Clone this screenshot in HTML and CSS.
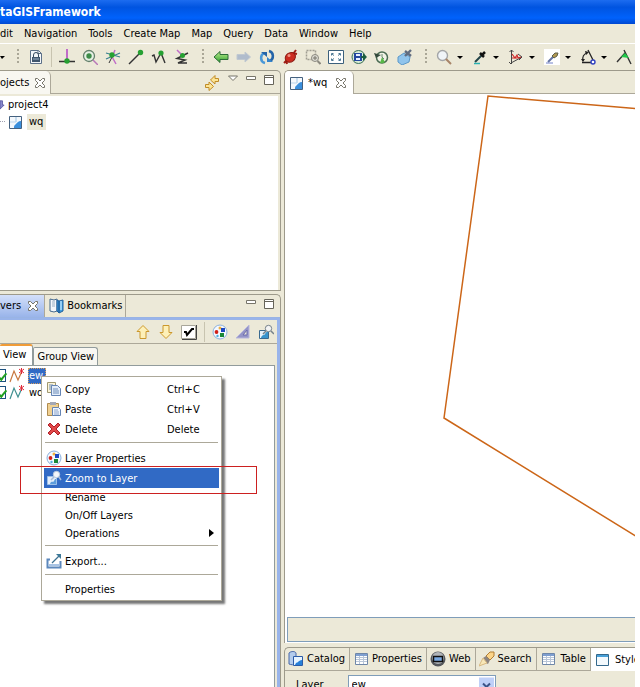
FILE: index.html
```
<!DOCTYPE html>
<html lang="en">
<head>
<meta charset="utf-8">
<title>GIS Framework</title>
<link rel="stylesheet" href="styles.css">
</head>
<body>
<svg class="defs" aria-hidden="true">
  <defs>
    <linearGradient id="blueFill" x1="0" y1="0" x2="1" y2="1"><stop offset="0" stop-color="#8cc4f0"/><stop offset="1" stop-color="#1c74c8"/></linearGradient>
    <linearGradient id="greenFill" x1="0" y1="0" x2="0" y2="1"><stop offset="0" stop-color="#c0f090"/><stop offset="1" stop-color="#30a030"/></linearGradient>
    <symbol id="close" viewBox="0 0 12 12"><path d="M1.500 1.500h2L6 4l2.500-2.500h2v2L8 6l2.500 2.500v2h-2L6 8l-2.500 2.500h-2v-2L4 6 1.500 3.500z" fill="#fff" stroke="#77756a"/></symbol>
    <symbol id="map" viewBox="0 0 14 14"><path d="M.5 1.500h12v12H.5z" fill="#f4f8fc" stroke="#45617f"/><path d="M1 7h6V2M7 2v5" stroke="#b9d4ea" fill="none"/><path d="M12 6v7H5c0-3 1-3 2-4s2-3 5-3z" fill="#3a8fdc"/></symbol>
    <symbol id="palette" viewBox="0 0 16 16"><circle cx="8" cy="8" r="7" fill="#f3f8ff" stroke="#8ab0dc"/><circle cx="8" cy="4" r="1.500" fill="#f0b040"/><circle cx="4.500" cy="8" r="1.900" fill="#d02018"/><rect x="9" y="4" width="4" height="4" fill="#1c48c0"/><rect x="8" y="9" width="4" height="4" fill="#188838"/><circle cx="5.500" cy="12" r="1.200" fill="#50b0e0"/></symbol>
    <symbol id="zoomlayer" viewBox="0 0 16 16"><path d="M1.500 6.500h9v8h-9z" fill="#e8f2fa" stroke="#3a6a90"/><path d="M10 8v6H3c1-4 3-2 4-4s1-2 3-2z" fill="#3a94cc"/><circle cx="10.500" cy="4.500" r="3.200" fill="#f4f4f4" stroke="#77828a"/><path d="M13 7l3 3M8 7l-3 3" stroke="#77828a" stroke-width="1.500"/></symbol>
    <symbol id="zoomhot" viewBox="0 0 16 16"><path d="M1.500 6.500h9v8h-9z" fill="#e4eefa" stroke="#9cc0e8"/><path d="M10 9v5H4c1-4 3-1 4-3s1-2 2-2z" fill="#5c9cdc"/><circle cx="10.500" cy="4.500" r="3.200" fill="#f4f6fa" stroke="#b8c8dc"/><path d="M13 7l2 3M8 7l-3 3" stroke="#a8bcd8" stroke-width="1.500"/></symbol>
    <symbol id="min" viewBox="0 0 10 10"><path d="M.5 1.500h9v3h-9z" fill="#fff" stroke="#77756a"/></symbol>
    <symbol id="max" viewBox="0 0 10 10"><path d="M.5.5h9v9h-9z" fill="#fff" stroke="#66645a"/><path d="M0 2.500h10" stroke="#66645a"/></symbol>
    <symbol id="grid" viewBox="0 0 14 14"><path d="M.5 1.500h12v11H.5z" fill="#fff" stroke="#6f87a8"/><path d="M1 3h11" stroke="#7f9fd0" stroke-width="2"/><path d="M1 5.500h11M1 7.500h11M1 9.500h11M4.500 4v8M8.500 4v8" stroke="#b9c6d8"/></symbol>
  </defs>
</svg>
<div class="app">
  <header class="title">taGISFramework</header>
  <nav class="menubar">
    <button>dit</button><button>Navigation</button><button>Tools</button><button>Create Map</button><button>Map</button><button>Query</button><button>Data</button><button>Window</button><button>Help</button>
  </nav>
  <div class="toolbar">
    <i class="caret"></i><i class="grip"></i>
    <button aria-label="Lock page"><svg viewBox="0 0 16 16"><path d="M2.500 1.500h8l3 3v10h-11z" fill="#f4f7fa" stroke="#5c7088"/><path d="M10 1.500v3h3.500" fill="none" stroke="#5c7088"/><path d="M5.500 8V6a2 2 0 0 1 5 0v2" fill="none" stroke="#34495e"/><path d="M4 8h8v5H4z" fill="#40566e"/><path d="M5 10h6" stroke="#9cb0c4"/></svg></button>
    <i class="sep"></i>
    <button aria-label="Snap to edge"><svg viewBox="0 0 16 16"><path d="M8 0v10" stroke="#c06cc8" stroke-width="2"/><path d="M0 12.500h16" stroke="#333" stroke-width="1.500"/><circle cx="8" cy="12" r="2.700" fill="#26a032"/></svg></button>
    <button aria-label="Zoom to point"><svg viewBox="0 0 16 16"><circle cx="7" cy="7" r="5.500" fill="#e6f0e4" stroke="#64806c" stroke-width="1.300"/><circle cx="7" cy="7" r="2.700" fill="#3c8c48"/><path d="M11 11l5 5" stroke="#b878b8" stroke-width="1.500"/></svg></button>
    <button aria-label="Snap intersection"><svg viewBox="0 0 16 16"><path d="M6 6l5 9M10 1L8 6" stroke="#c06cc8" stroke-width="1.500"/><path d="M1 10l14-6M1 4l14 4" stroke="#3a8090" stroke-width="1.300"/><path d="M8 6L4 14" stroke="#333"/><circle cx="7" cy="6" r="2.700" fill="#26a032"/></svg></button>
    <button aria-label="Snap end"><svg viewBox="0 0 16 16"><path d="M1 15L12 4" stroke="#333" stroke-width="1.500"/><circle cx="12.500" cy="3.500" r="2.700" fill="#26a032"/></svg></button>
    <button aria-label="Snap vertex"><svg viewBox="0 0 16 16"><path d="M1 7l2-1 2 7 5-9 4 10" fill="none" stroke="#333" stroke-width="1.400"/><circle cx="10" cy="4" r="2.600" fill="#26a032"/></svg></button>
    <button aria-label="Snap line"><svg viewBox="0 0 16 16"><path d="M3 1l5 5" stroke="#c06cc8" stroke-width="1.500"/><path d="M14 4L3 9.500l8 1.500-7 3h9" fill="none" stroke="#333" stroke-width="1.500"/><circle cx="8.500" cy="6.500" r="2.500" fill="#26a032"/></svg></button>
    <i class="grip"></i>
    <button aria-label="Back"><svg viewBox="0 0 16 16"><path d="M1 8l6-5.500v3h8v5H7v3z" fill="url(#greenFill)" stroke="#2c6c38"/></svg></button>
    <button aria-label="Forward"><svg viewBox="0 0 16 16"><path d="M14.500 8L9 3v2.500H1v5h8V13z" fill="#b0bccc" stroke="#c0c8d0"/></svg></button>
    <button aria-label="Refresh"><svg viewBox="0 0 16 16"><path d="M6 14C1 13 1 6 5 4" fill="none" stroke="#4a98d8" stroke-width="2.500"/><path d="M2 3h6v5z" fill="#2464a8"/><path d="M10 2c5 1 5 8 1 10" fill="none" stroke="#2464a8" stroke-width="2.500"/><path d="M14 13H8V8z" fill="#3484cc"/></svg></button>
    <button aria-label="Stop"><svg viewBox="0 0 16 16"><path d="M2 14l3-3M11 5l3-4M10 4l5 1M4 11l1 4" stroke="#a02018" stroke-width="2"/><ellipse cx="8" cy="8.500" rx="5.500" ry="4.500" transform="rotate(-40 8 8)" fill="#cc2c20" stroke="#8c1810"/><circle cx="7" cy="6.500" r="1.500" fill="#f09080"/></svg></button>
    <button aria-label="Zoom box"><svg viewBox="0 0 16 16"><path d="M1.500 1.500h9v9h-9z" fill="none" stroke="#a09e92" stroke-width="1.500" stroke-dasharray="2 1"/><circle cx="10" cy="9" r="3.500" fill="#dddcd4" stroke="#8c8a80"/><path d="M8 9h4M10 7v4" stroke="#77756a"/><path d="M12.500 12l3 3" stroke="#8c8a80" stroke-width="2"/></svg></button>
    <button aria-label="Full extent"><svg viewBox="0 0 16 16"><path d="M.5 1.500h15v13H.5z" fill="#fff" stroke="#3c607c"/><path d="M3.500 6.500v-2h2M10.500 4.500h2v2M12.500 9.500v2h-2M5.500 11.500h-2v-2M4 5l2 1.500M12 5l-2 1.500M4 11l2-1.500M12 11l-2-1.500" fill="none" stroke="#4c7894"/></svg></button>
    <button aria-label="Save view"><svg viewBox="0 0 16 16"><circle cx="7.500" cy="8" r="6.500" fill="#d8ecd8" stroke="#3c7058"/><path d="M3 4h8v8H3z" fill="#2448a0"/><path d="M5 5h4v2H5zM5 9h4v2H5z" fill="#e8f0ff"/><path d="M10 7h2V4l4 4-4 4V9h-2z" fill="#1c5c40"/></svg></button>
    <button aria-label="Undo view"><svg viewBox="0 0 16 16"><circle cx="8" cy="8.500" r="5.500" fill="#f1f3e6" stroke="#4c6c54" stroke-width="1.500"/><path d="M0 4l2 5 5-3z" fill="#344a3c"/><path d="M8 8l-2 6a5 5 0 0 0 5-1z" fill="#58b848"/><path d="M8 5v3l2 2" fill="none" stroke="#6a8870"/></svg></button>
    <button aria-label="Clear selection"><svg viewBox="0 0 16 16"><path d="M1 8l6-4 6 4-1 5-7 3-4-3z" fill="#90c4ec" stroke="#5c98c8"/><path d="M8 2l6 5M14 1L8 7" stroke="#606c80" stroke-width="2.400"/></svg></button>
    <i class="grip"></i>
    <button class="drop" aria-label="Zoom"><svg viewBox="0 0 16 16"><circle cx="6.500" cy="6.500" r="5" fill="#f0f4f8" stroke="#a4a6a8" stroke-width="1.400"/><path d="M10 10l5 5" stroke="#a88468" stroke-width="2"/></svg><i class="caret"></i></button>
    <button class="drop" aria-label="Pick"><svg viewBox="0 0 16 16"><path d="M3 13l7-7" stroke="#244448" stroke-width="2"/><path d="M2 14.500h6" stroke="#28b0b0" stroke-width="1.500"/><path d="M8 4l4 4M10 6l3-3" stroke="#111" stroke-width="2.500"/></svg><i class="caret"></i></button>
    <button class="drop" aria-label="Move geometry"><svg viewBox="0 0 16 16"><path d="M3.500 1v14M1.500 3l2-2 2 2M3 14l11-6M10 5l4 3-3 3M1 13l2 2" fill="none" stroke="#444"/><path d="M4 5l3 4 2-3 1 3 3-1M4 9h5" fill="none" stroke="#d02828" stroke-width="1.200"/></svg><i class="caret"></i></button>
    <button class="drop" aria-label="Edit style"><svg viewBox="0 0 16 16"><path d="M0 0h16v16H0z" fill="#fff"/><path d="M4 13l7-7" stroke="#6474a4" stroke-width="2"/><path d="M8 7l3-3h3l-1 3-3 2z" fill="#b09850" stroke="#60604c"/><path d="M2 14h7" stroke="#7080c8"/></svg><i class="caret"></i></button>
    <button class="drop" aria-label="Measure angle"><svg viewBox="0 0 16 16"><path d="M8 1l5 10M2 13.500h9M3 12c-1-4 1-7 4-8" fill="none" stroke="#222" stroke-width="1.300"/><path d="M5 2l4 1-3 3zM1 10l4 0-2 3z" fill="#222"/><circle cx="13" cy="13" r="2" fill="#fff" stroke="#3040c0" stroke-width="1.400"/></svg><i class="caret"></i></button>
    <button aria-label="Split"><svg viewBox="0 0 16 16"><path d="M1 13L9 4M8 1l7 14" stroke="#333" stroke-width="1.400"/><path d="M5 8l8 1-4-5z" fill="#20c848"/></svg></button>
  </div>
  <main class="work">
    <div class="left">
      <section class="panel projects">
        <div class="tabs">
          <div class="tab active">ojects <svg class="x"><use href="#close"/></svg></div>
          <div class="tools">
            <svg class="i16" viewBox="0 0 16 16"><path d="M14.500 3.500H11v-3L6.500 5l4.500 4V6.500h3.500zM1.500 9.500H5V7l4.500 4.500L5 15.500v-3H1.500z" fill="#fce494" stroke="#c08c28"/></svg>
            <svg class="i10" viewBox="0 0 10 10"><path d="M.5 1h9L5 5.500z" fill="#fff" stroke="#77756a"/></svg>
            <svg class="i10"><use href="#min"/></svg><svg class="i10"><use href="#max"/></svg>
          </div>
        </div>
        <div class="tree">
          <div class="node"><svg class="folder" viewBox="0 0 6 14"><path d="M0 2h3v5h2l-5 5z" fill="#8888cc" stroke="#5858a0"/></svg>project4</div>
          <div class="node child"><i class="twig"></i><svg class="i14"><use href="#map"/></svg><span>wq</span></div>
        </div>
      </section>
      <section class="panel layers">
        <div class="tabs">
          <div class="tab active">vers <svg class="x"><use href="#close"/></svg></div>
          <div class="tab"><svg class="i16" viewBox="0 0 16 16"><path d="M1 1l4 1 3-1v12l-3 1-4-1z" fill="#f4f8fc" stroke="#44688c"/><path d="M8 2l2 1v12l-2-2zM10 3l4-1v11l-4 2z" fill="#3c9ce0" stroke="#20609c"/><path d="M3 4h3M3 6h3M3 8h3" stroke="#9ab0c4"/><path d="M12 3v9" stroke="#b4e0fc" stroke-width="1.500"/></svg>Bookmarks</div>
          <div class="tools"><svg class="i10"><use href="#min"/></svg><svg class="i10"><use href="#max"/></svg></div>
        </div>
        <div class="layerbox">
          <div class="actions">
            <button aria-label="Move up"><svg viewBox="0 0 16 16"><path d="M8 1.500l6 6h-3v7H5v-7H2z" fill="#fdf0b8" stroke="#cc982c"/></svg></button>
            <button aria-label="Move down"><svg viewBox="0 0 16 16"><path d="M8 14.500l6-6h-3v-7H5v7H2z" fill="#fdf0b8" stroke="#cc982c"/></svg></button>
            <button aria-label="Toggle all"><svg viewBox="0 0 16 16"><path d="M.5 1.500h14v13H.5z" fill="#fff" stroke="#a8a69a"/><path d="M15.500 1v14.500H1" fill="none" stroke="#444"/><path d="M3 8h2l1 3 5-6h2" fill="none" stroke="#000" stroke-width="2"/></svg></button>
            <i class="sep"></i>
            <button aria-label="Layer colours"><svg><use href="#palette"/></svg></button>
            <button aria-label="Style editor"><svg viewBox="0 0 16 16"><path d="M1 14L14 1v13z" fill="#9494c8" stroke="#b8b8dc"/><path d="M8 11l4-5v5z" fill="#ece9d8" stroke="#6c6cac"/></svg></button>
            <button aria-label="Zoom to layer"><svg><use href="#zoomlayer"/></svg></button>
          </div>
          <div class="viewtabs"><button class="on">View</button><button>Group View</button></div>
          <div class="list">
            <div class="row"><input type="checkbox" checked id="ew"><svg class="i16" viewBox="0 0 16 16"><path d="M1 14L5 3l4 9 4-9" fill="none" stroke="#c87840" stroke-width="1.200"/><path d="M10 1l5 4M15 1l-5 4M12.500 0v6" stroke="#e02838"/></svg><label for="ew" class="sel">ew</label></div>
            <div class="row"><input type="checkbox" checked id="wq"><svg class="i16" viewBox="0 0 16 16"><path d="M1 14L5 3l4 9 4-9" fill="none" stroke="#409090" stroke-width="1.200"/><path d="M10 1l5 4M15 1l-5 4M12.500 0v6" stroke="#e02838"/></svg><label for="wq">wq</label></div>
          </div>
        </div>
      </section>
    </div>
    <div class="right">
      <section class="panel editor">
        <div class="tabs"><div class="tab active"><svg class="i14"><use href="#map"/></svg>*wq <svg class="x"><use href="#close"/></svg></div></div>
        <div class="canvas"><svg><path d="M401 19L203 2l-44 322 242 149" fill="none" stroke="#cc6618" stroke-width="1.500"/></svg></div>
        <div class="status"></div>
      </section>
      <section class="panel bottom">
        <div class="tabs">
          <div class="tab"><svg class="i16" viewBox="0 0 16 16"><path d="M1 2c2-2 6-2 7 0v11c-2 1-5 1-7 0z" fill="#b4ccec" stroke="#4868a8"/><path d="M5.500 5.500h9v9h-9z" fill="#e8f4ff" stroke="#2c5ca8"/><path d="M14 9v5H7c1-3 2-2 3-3s2-2 4-2z" fill="#2880d8"/></svg>Catalog</div>
          <div class="tab"><svg class="i14"><use href="#grid"/></svg>Properties</div>
          <div class="tab"><svg class="i16" viewBox="0 0 16 16"><circle cx="8" cy="8" r="7.500" fill="#55585c"/><circle cx="8" cy="7" r="6" fill="#b0b4b8"/><path d="M3.500 5.500h9v5h-9z" fill="#78a8e0" stroke="#111" stroke-width="1.500"/></svg>Web</div>
          <div class="tab"><svg class="i16" viewBox="0 0 16 16"><path d="M7 5l4-4h4v4l-4 4z" fill="#fcd488" stroke="#b07c34"/><path d="M4 7l3-2 4 4-2 4-4-2z" fill="#8c8480"/><path d="M0 15l4-8 4 5z" fill="#f8e8b8" stroke="#d8b880"/></svg>Search</div>
          <div class="tab"><svg class="i14"><use href="#grid"/></svg>Table</div>
          <div class="tab active"><svg class="i14" viewBox="0 0 14 14"><path d="M.5 1.500h12v11H.5z" fill="#f3f9fd" stroke="#34688c"/><path d="M1 3h11" stroke="#48a0d8" stroke-width="2"/></svg>Style</div>
        </div>
        <div class="form"><label for="layer">Layer</label><div class="combo"><select id="layer"><option>ew</option></select><svg viewBox="0 0 15 15"><path d="M0 0h15v15H0z" fill="#bfd0f8"/><path d="M4 6l3.500 3.500L11 6" fill="none" stroke="#3c5488" stroke-width="2"/></svg></div></div>
      </section>
    </div>
  </main>
  <div class="popup" role="menu">
    <button class="big"><svg viewBox="0 0 16 16"><path d="M1.500 1.500h8v10h-8z" fill="#fbf4d8" stroke="#a09870"/><path d="M5.500 4.500h6l3 3v7h-9z" fill="#e4eefa" stroke="#6484b4"/><path d="M3 4h4M3 6h2M3 8h2M7 8h5M7 10h6M7 12h6" stroke="#6c8cb8"/></svg><span>Copy</span><kbd>Ctrl+C</kbd></button>
    <button class="big"><svg viewBox="0 0 16 16"><path d="M1.500 2.500h11v12h-11z" fill="#f0d090" stroke="#b08c50"/><path d="M4 1h6v3H4z" fill="#a4a8b4"/><path d="M6.500 6.500h6l2 2v6h-8z" fill="#eef4fc" stroke="#6484b4"/><path d="M8 9h4M8 11h5M8 13h5" stroke="#8ca4cc"/></svg><span>Paste</span><kbd>Ctrl+V</kbd></button>
    <button class="big"><svg viewBox="0 0 16 16"><path d="M2 4l2-2 4 4 4-4 2 2-4 4 4 4-2 2-4-4-4 4-2-2 4-4z" fill="#e04848" stroke="#b02028"/></svg><span>Delete</span><kbd>Delete</kbd></button>
    <hr>
    <button class="big"><svg><use href="#palette"/></svg><span>Layer Properties</span></button>
    <button class="big hot"><svg><use href="#zoomhot"/></svg><span>Zoom to Layer</span></button>
    <button><i></i><span>Rename</span></button>
    <button><i></i><span>On/Off Layers</span></button>
    <button><i></i><span>Operations</span><b class="sub"></b></button>
    <hr>
    <button class="big"><svg viewBox="0 0 16 16"><path d="M4 6.500H1.500v8h13V8" fill="none" stroke="#5c88bc" stroke-width="2"/><path d="M3 12h10" stroke="#a8c4e4" stroke-width="2"/><path d="M6 10l7-7" stroke="#3c7090" stroke-width="1.200"/><path d="M10 1h5v5z" fill="#3c7898"/></svg><span>Export...</span></button>
    <hr>
    <button><i></i><span>Properties</span></button>
  </div>
  <div class="mark"></div>
</div>
</body>
</html>
```
FILE: styles.css
```
* { box-sizing: border-box; }
body { margin: 0 5px 0 0; background: #fff; font: 11px/16px "DejaVu Sans Condensed", "DejaVu Sans", sans-serif; color: #000; }
.defs { position: absolute; width: 0; height: 0; }
svg { display: block; flex: none; }
button { font: inherit; color: inherit; background: none; border: 0; padding: 0; white-space: nowrap; }
.app { position: relative; display: flex; flex-direction: column; height: 100vh; overflow: hidden; background: #ece9d8; }
.title { height: 24px; flex: none; font: bold 12px/24px "DejaVu Sans Condensed", sans-serif; color: #fff; background: linear-gradient(#1c6cf0, #0054e0 30%, #0062fc 75%, #0048d0); }
.menubar { display: flex; flex: none; gap: 11px; height: 20px; border-bottom: 1px solid #fff; }
.toolbar { display: flex; flex: none; align-items: center; gap: 7px; height: 26px; overflow: hidden; }
.toolbar button, .actions button { flex: none; width: 16px; height: 16px; }
.toolbar svg, .actions svg { width: 16px; height: 16px; }
.toolbar .drop { display: flex; align-items: center; gap: 5px; width: 28px; margin-right: 1px; }
.caret { flex: none; width: 5px; border: solid transparent; border-width: 3px 3px 0 2px; border-top-color: #000; }
.drop .caret { width: 6px; border-width: 3px 3px 0; }
.grip { flex: none; width: 2px; height: 16px; margin: 0 2px 0 5px; background: repeating-linear-gradient(#aaa797 0 2px, transparent 2px 4px); }
.sep { flex: none; width: 1px; height: 20px; background: #c8c4b0; }
.work { display: grid; grid-template-columns: 281px 1fr; column-gap: 3px; flex: 1; min-height: 0; }
.left { display: grid; grid-template-rows: 221px 1fr; row-gap: 3px; min-height: 0; }
.right { display: grid; grid-template-rows: 1fr 40px; row-gap: 4px; min-width: 0; min-height: 0; }
.panel { display: flex; flex-direction: column; min-width: 0; min-height: 0; border: 1px solid #9d9a8b; border-left: 0; border-bottom: 0; border-top-right-radius: 5px; overflow: hidden; }
.right .panel { border-left: 1px solid #9d9a8b; border-right: 0; border-radius: 5px 0 0; }
.tabs { display: flex; flex: none; height: 23px; border-bottom: 1px solid #aca899; }
.tab { display: flex; align-items: center; flex: none; gap: 3px; height: 22px; padding: 0 4px; border-right: 1px solid #aca899; white-space: nowrap; }
.x { width: 12px; height: 12px; margin-left: 4px; }
.i16 { width: 16px; height: 16px; }
.i14 { width: 14px; height: 14px; }
.i10 { width: 10px; height: 10px; }
.tools { display: flex; flex: 1; justify-content: flex-end; align-items: flex-start; gap: 8px; padding: 4px 6px 0 0; }
.projects { border-bottom: 1px solid #9d9a8b; }
.projects .tab { padding: 0 4px 0 0; gap: 1px; }
.projects .active, .editor .active { height: 23px; border-top-right-radius: 5px; background: #f8f7f1; }
.tree { flex: 1; margin: 2px 2px 0 0; background: #fff; }
.node { display: flex; align-items: center; gap: 3px; height: 17px; }
.folder { width: 5px; height: 14px; }
.child { gap: 4px; }
.child span { padding: 0 3px 0 2px; background: #ece9d8; }
.twig { width: 5px; border-top: 1px dotted #a0a0b0; }
.layers .tabs { border-bottom-color: #99b4e4; }
.layers .tab { padding: 0 3px 0 4px; gap: 2px; }
.layers .active { padding: 0 5px 0 0; background: linear-gradient(#d4e0fa, #99b4ea); }
.layerbox { display: flex; flex-direction: column; flex: 1; border: solid #99b4ea; border-width: 2px 3px 0 0; }
.actions { display: flex; flex: none; justify-content: flex-end; align-items: center; gap: 7px; height: 24px; padding-right: 3px; border-bottom: 1px solid #aca899; }
.viewtabs { display: flex; align-items: flex-end; height: 21px; flex: none; }
.viewtabs button { height: 18px; padding: 0 3px; border: 1px solid #919b9c; border-bottom: 0; border-radius: 2px 3px 0 0; background: #f8f7f2; }
.viewtabs .on { height: 21px; border-top: 2px solid #f09c38; background: #fff; border-left: 0; padding: 0 6px 2px 3px; }
.list { flex: 1; margin-right: 2px; border: solid #919b9c; border-width: 1px 1px 0 0; background: #fff; padding-top: 1px; }
.row { display: flex; align-items: center; gap: 3px; height: 17px; }
.row input { appearance: none; position: relative; flex: none; width: 13px; height: 13px; margin: 0 0 0 -7px; border: 1px solid #1c5180; background: #fff; }
.row input::after { content: ""; position: absolute; left: 5px; top: 1px; width: 4px; height: 7px; border: solid #21a121; border-width: 0 2px 2px 0; transform: rotate(40deg); }
.row label { padding: 0 3px 0 1px; }
.row .sel { color: #fff; background: #316ac5; outline: 1px dotted #d8a060; outline-offset: -1px; }
.editor .tab { padding: 0 6px 0 5px; gap: 4px; background: #fff; }
.canvas { flex: 1; min-height: 0; overflow: hidden; background: #fff; }
.canvas svg { width: 100%; height: 100%; }
.status { flex: none; height: 25px; margin-left: 2px; border: 1px solid #7f9db9; border-right: 0; box-shadow: 0 0 0 2px #fff; }
.editor { padding-bottom: 1px; }
.bottom .tab { padding: 0 4px 0 3px; }
.bottom .tab + .tab { padding-left: 5px; }
.bottom .tab:nth-child(3), .bottom .tab:nth-child(4) { padding-left: 3px; }
.bottom .tab:nth-child(n+5) { gap: 5px; }
.bottom .active { background: #fff; height: 23px; border-right: 0; }
.form { display: flex; align-items: flex-start; gap: 24px; padding: 4px 0 0 11px; }
.form label { padding-top: 2px; }
.combo { display: flex; width: 148px; height: 20px; padding: 1px; border: 1px solid #7f9db9; background: #fff; }
.combo select { appearance: none; flex: 1; min-width: 0; padding: 0 2px; border: 0; background: #fff; font: inherit; }
.combo svg { width: 15px; height: 16px; }
.popup { position: absolute; left: 41px; top: 376px; width: 181px; padding: 2px; border: 1px solid #aca899; background: #fff; box-shadow: 3px 3px 2px #777; }
.popup button { display: grid; grid-template-columns: 16px 99px 1fr; column-gap: 3px; align-items: center; width: 100%; height: 18px; padding-left: 2px; text-align: left; }
.popup .big { height: 20px; }
.popup svg { width: 16px; height: 16px; }
.popup kbd { font: inherit; }
.popup span, .popup kbd { padding-top: 2px; }
.popup .hot { color: #fff; background: #316ac5; }
.popup hr { width: auto; height: 1px; margin: 3px 1px 5px; border: 0; background: #aca899; }
.sub { justify-self: end; margin-right: 5px; border: solid transparent; border-width: 4px 0 4px 5px; border-left-color: #000; }
.mark { position: absolute; left: 20px; top: 466px; width: 237px; height: 28px; border: 1px solid #cc2020; }
```
